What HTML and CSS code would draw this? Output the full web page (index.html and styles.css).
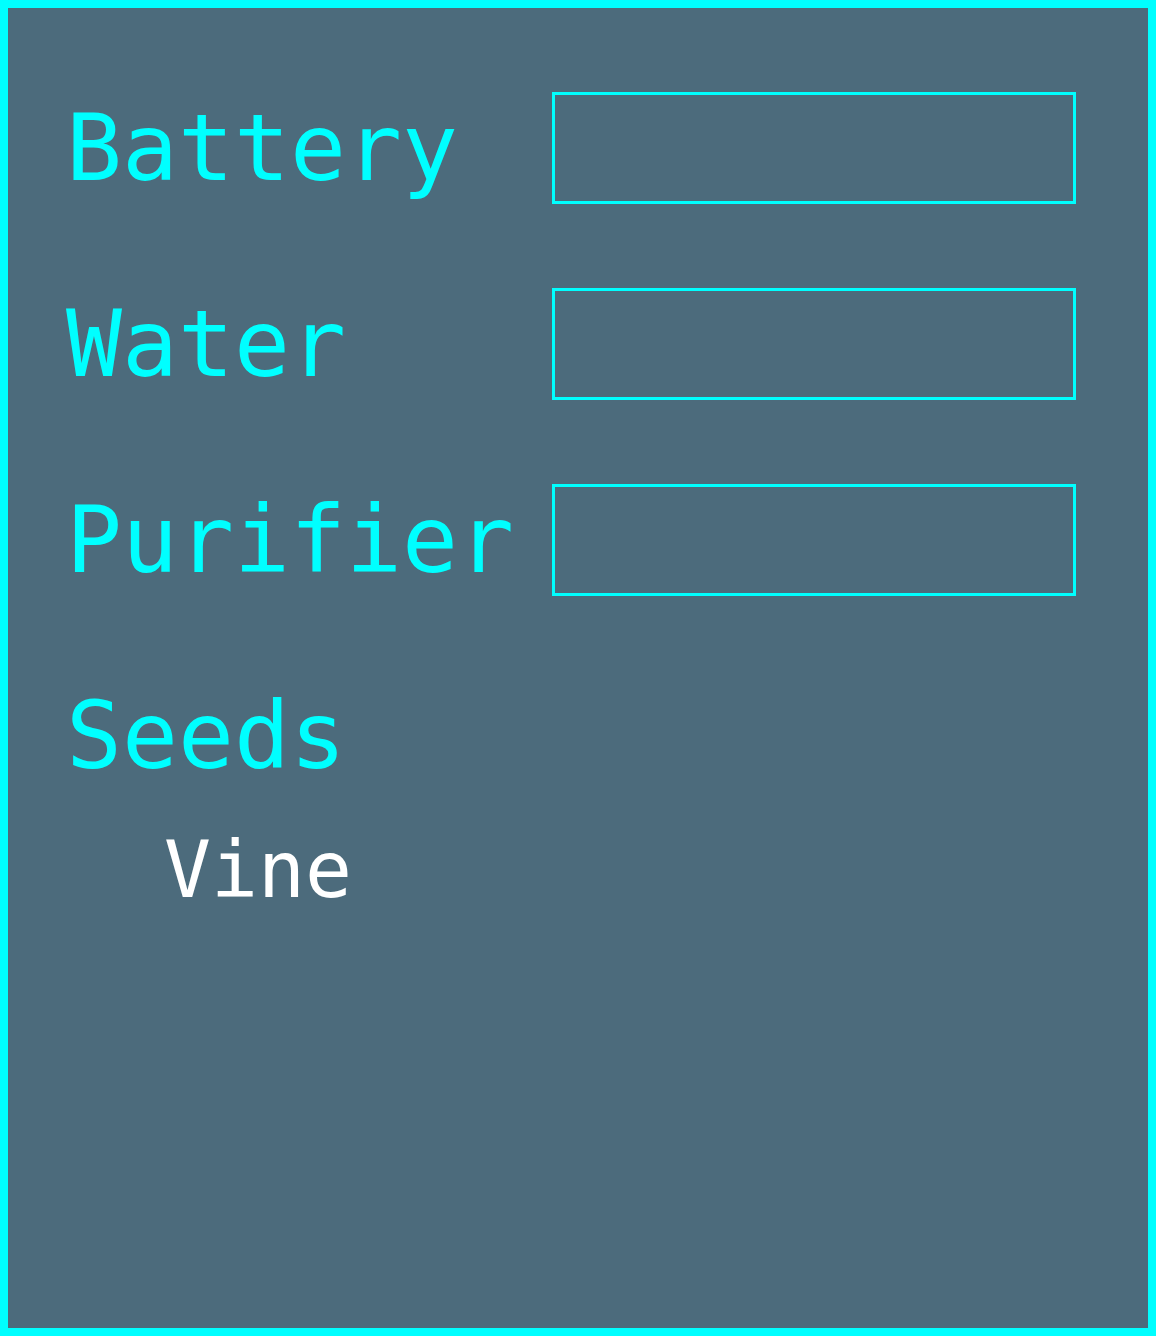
FILE: index.html
```html
<!DOCTYPE html>
<html>
<head>
<meta charset="utf-8">
<link rel="stylesheet" href="styles.css">
</head>
<body>
<div class="frame">
  <div class="row"><span class="label">Battery</span><div class="slot"></div></div>
  <div class="row"><span class="label">Water</span><div class="slot"></div></div>
  <div class="row"><span class="label">Purifier</span><div class="slot"></div></div>
  <div class="row"><span class="label">Seeds</span></div>
  <div class="item">Vine</div>
</div>
</body>
</html>
```
FILE: styles.css
```css
html, body {
  margin: 0;
  padding: 0;
}
.frame {
  box-sizing: border-box;
  width: 1156px;
  height: 1336px;
  border: 8px solid #00ffff;
  background: #4c6b7c;
  padding: 84px 0 0 58px;
  display: flex;
  flex-direction: column;
  gap: 84px;
  font-family: "DejaVu Sans Mono", monospace;
}
.row {
  display: flex;
  align-items: flex-start;
  height: 112px;
}
.label {
  width: 486px;
  flex: none;
  font-size: 93px;
  line-height: 112px;
  color: #00ffff;
  white-space: nowrap;
}
.slot {
  box-sizing: border-box;
  width: 524px;
  height: 112px;
  border: 3px solid #00ffff;
}
.item {
  margin-top: -52px;
  padding-left: 98px;
  font-size: 78px;
  line-height: 92px;
  color: #ffffff;
}
```
